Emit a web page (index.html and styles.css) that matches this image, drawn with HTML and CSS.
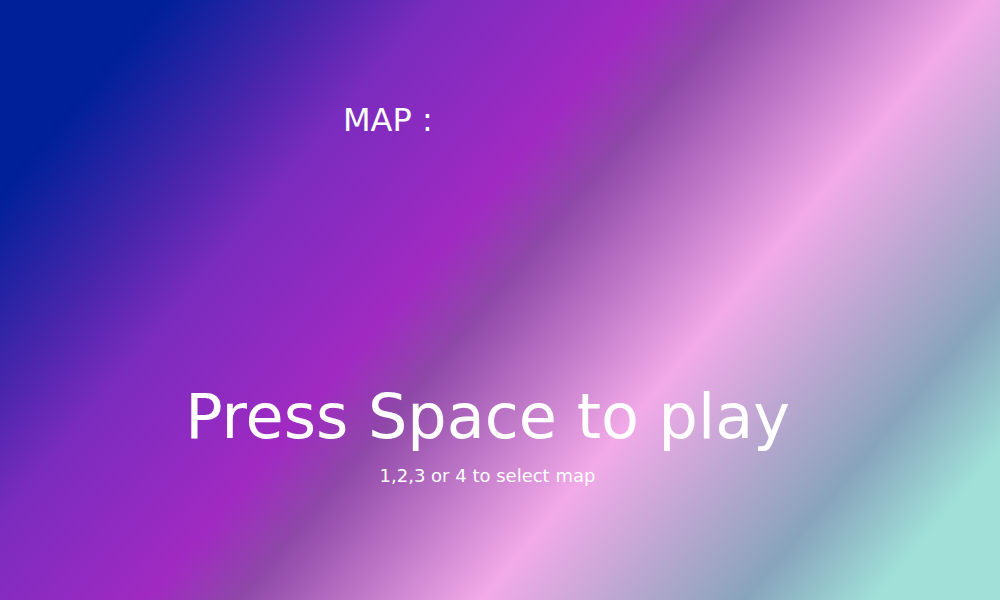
FILE: index.html
```html
<!DOCTYPE html>
<html lang="en">
<head>
<meta charset="utf-8">
<title>Press Space to play</title>
<link rel="stylesheet" href="styles.css">
</head>
<body>
<main class="screen">
  <div class="map-label">MAP :</div>
  <div class="prompt">
    <div class="prompt-title">Press Space to play</div>
    <div class="prompt-sub">1,2,3 or 4 to select map</div>
  </div>
</main>
</body>
</html>
```

FILE: styles.css
```css
html, body {
  margin: 0;
  padding: 0;
  width: 1000px;
  height: 600px;
  overflow: hidden;
}

body {
  font-family: "DejaVu Sans", Verdana, sans-serif;
  color: #ffffff;
}

.screen {
  box-sizing: border-box;
  width: 1000px;
  height: 600px;
  padding-top: 101px;
  display: flex;
  flex-direction: column;
  background: linear-gradient(130deg,
    #00209a 0%,
    #00209a 11%,
    #4a26ac 22%,
    #7a2cbe 29%,
    #a02ac2 43.3%,
    #8e48a8 49.4%,
    #f2aae8 65.5%,
    #88a4bc 83%,
    #a0e0d8 91.6%,
    #a0e0d8 100%);
}

.map-label {
  font-size: 32px;
  margin-left: 343px;
  align-self: flex-start;
}

.prompt {
  margin-top: 241px;
  padding-right: 25px;
  display: flex;
  flex-direction: column;
  align-items: center;
  gap: 12px;
}

.prompt-title {
  font-size: 62px;
}

.prompt-sub {
  font-size: 18px;
}
```
